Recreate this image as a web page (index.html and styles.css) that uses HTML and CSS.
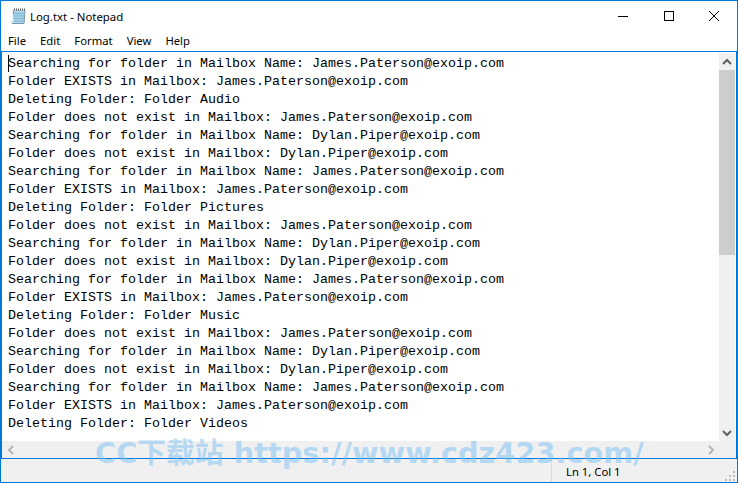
FILE: index.html
```html
<!DOCTYPE html>
<html lang="en">
<head>
<meta charset="utf-8">
<title>Log.txt - Notepad</title>
<link rel="stylesheet" href="styles.css">
</head>
<body>
<div class="window">
  <header class="titlebar">
    <svg class="app-icon" width="18" height="18" viewBox="0 0 18 18">
      <path d="M4.5 3.5h11.5l-1 13h-12z" fill="#a9d6ec" stroke="#7d98a8"/>
      <path d="M5 6.500h10M5 9h10M4.600 11.500h10M4.400 14h10" stroke="#7fb2cf"/>
      <path d="M3.500 7v9" stroke="#e8f4fa" stroke-width="1.5"/>
      <path d="M5 1.500h10v2H5z" fill="#fff"/>
      <path d="M5.500 1.500v2M7.500 1.500v2M9.500 1.500v2M11.500 1.500v2M13.500 1.500v2M15.500 1.500v2" stroke="#555"/>
    </svg>
    <span class="title">Log.txt - Notepad</span>
    <div class="controls">
      <span class="ctl"><svg width="12" height="12" viewBox="0 0 12 12"><path d="M1 6.500h10" stroke="#000"/></svg></span>
      <span class="ctl"><svg width="12" height="12" viewBox="0 0 12 12"><rect x="1.500" y="1.500" width="9" height="9" fill="none" stroke="#000"/></svg></span>
      <span class="ctl"><svg width="12" height="12" viewBox="0 0 12 12"><path d="M1 1l10 10M11 1L1 11" stroke="#000"/></svg></span>
    </div>
  </header>
  <nav class="menu"><span>File</span><span>Edit</span><span>Format</span><span>View</span><span>Help</span></nav>
  <main class="editor">
    <div class="edit-row">
      <div class="text"><i class="caret"></i><div>Searching for folder in Mailbox Name: James.Paterson@exoip.com</div>
<div>Folder EXISTS in Mailbox: James.Paterson@exoip.com</div>
<div>Deleting Folder: Folder Audio</div>
<div>Folder does not exist in Mailbox: James.Paterson@exoip.com</div>
<div>Searching for folder in Mailbox Name: Dylan.Piper@exoip.com</div>
<div>Folder does not exist in Mailbox: Dylan.Piper@exoip.com</div>
<div>Searching for folder in Mailbox Name: James.Paterson@exoip.com</div>
<div>Folder EXISTS in Mailbox: James.Paterson@exoip.com</div>
<div>Deleting Folder: Folder Pictures</div>
<div>Folder does not exist in Mailbox: James.Paterson@exoip.com</div>
<div>Searching for folder in Mailbox Name: Dylan.Piper@exoip.com</div>
<div>Folder does not exist in Mailbox: Dylan.Piper@exoip.com</div>
<div>Searching for folder in Mailbox Name: James.Paterson@exoip.com</div>
<div>Folder EXISTS in Mailbox: James.Paterson@exoip.com</div>
<div>Deleting Folder: Folder Music</div>
<div>Folder does not exist in Mailbox: James.Paterson@exoip.com</div>
<div>Searching for folder in Mailbox Name: Dylan.Piper@exoip.com</div>
<div>Folder does not exist in Mailbox: Dylan.Piper@exoip.com</div>
<div>Searching for folder in Mailbox Name: James.Paterson@exoip.com</div>
<div>Folder EXISTS in Mailbox: James.Paterson@exoip.com</div>
<div>Deleting Folder: Folder Videos</div></div>
      <div class="vscroll">
        <span class="sbtn"><svg width="10" height="8" viewBox="0 0 10 8"><path d="M1 6l4-4 4 4" fill="none" stroke="#606060" stroke-width="2"/></svg></span>
        <span class="thumb"></span>
        <span class="track"></span>
        <span class="sbtn"><svg width="10" height="8" viewBox="0 0 10 8"><path d="M1 2l4 4 4-4" fill="none" stroke="#606060" stroke-width="2"/></svg></span>
      </div>
    </div>
    <div class="hscroll">
      <span class="hbtn"><svg width="8" height="10" viewBox="0 0 8 10"><path d="M6 1L2 5l4 4" fill="none" stroke="#b4b4b4" stroke-width="2"/></svg></span>
      <span class="htrack"></span>
      <span class="hbtn"><svg width="8" height="10" viewBox="0 0 8 10"><path d="M2 1l4 4-4 4" fill="none" stroke="#b4b4b4" stroke-width="2"/></svg></span>
    </div>
  </main>
  <footer class="status">
    <span class="pos">Ln 1, Col 1</span>
    <svg class="grip" width="12" height="12" viewBox="0 0 12 12"><path d="M9 1h2v2H9zM5 5h2v2H5zM9 5h2v2H9zM1 9h2v2H1zM5 9h2v2H5zM9 9h2v2H9z" fill="#bdbdbd"/></svg>
  </footer>
  <div class="watermark">CC下载站 https://www.cdz423.com/</div>
</div>
</body>
</html>
```
FILE: styles.css
```css
* { box-sizing: border-box; }
html, body { margin: 0; padding: 0; }
body { width: 738px; height: 483px; overflow: hidden; background: #fff; }
.window {
  position: relative;
  width: 738px;
  height: 483px;
  border: 1px solid #0078d7;
  overflow: hidden;
  display: flex;
  flex-direction: column;
  font-family: "Noto Sans", "Liberation Sans", sans-serif;
  color: #000;
  background: #fff;
}
.titlebar { height: 29px; display: flex; align-items: center; padding-left: 8px; }
.app-icon { flex: none; }
.title { margin-left: 3px; margin-top: 2px; font-size: 11.4px; }
.controls { margin-left: auto; display: flex; }
.ctl { width: 45.5px; height: 29px; display: flex; align-items: center; justify-content: center; }
.menu { height: 21px; display: flex; gap: 14px; padding-left: 7px; align-items: center; font-size: 11.3px; }
.editor {
  flex: 1;
  min-height: 0;
  display: flex;
  flex-direction: column;
  border: 1px solid #0078d7;
  background: #fff;
}
.edit-row { flex: 1; min-height: 0; display: flex; }
.text {
  position: relative;
  flex: 1;
  padding: 3px 0 0 6px;
  font-family: "Liberation Mono", monospace;
  font-size: 13.33px;
  line-height: 18px;
  white-space: nowrap;
  overflow: hidden;
}
.caret { position: absolute; left: 6px; top: 3px; width: 1px; height: 17px; background: #000; }
.vscroll { width: 16px; margin: 1px 1px 0 0; display: flex; flex-direction: column; background: #f0f0f0; }
.sbtn { height: 17px; display: flex; align-items: center; justify-content: center; flex: none; }
.thumb { height: 185px; background: #cdcdcd; flex: none; }
.track { flex: 1; }
.hscroll { height: 17px; background: #f0f0f0; display: flex; }
.hbtn { width: 17px; display: flex; align-items: center; justify-content: center; }
.hbtn:last-child { margin-right: 17px; }
.htrack { flex: 1; }
.status { height: 23px; background: #f0f0f0; display: flex; align-items: center; position: relative; font-size: 11.3px; }
.pos { margin-left: 550px; padding-left: 14px; border-left: 1px solid #d7d7d7; height: 23px; line-height: 25px; }
.grip { position: absolute; right: 1px; bottom: 0; }
.watermark {
  position: absolute;
  left: 94px;
  top: 436px;
  font-family: "DejaVu Sans", "Noto Sans CJK SC", sans-serif;
  font-size: 28.8px;
  font-weight: 700;
  line-height: 32px;
  white-space: nowrap;
  color: rgba(120, 190, 245, 0.5);
}
```
